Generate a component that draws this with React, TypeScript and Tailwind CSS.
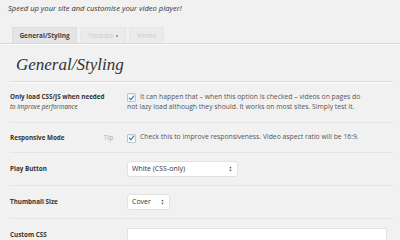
import React from 'react'

const sans = { fontFamily: '"Open Sans", "Liberation Sans", sans-serif' }

const Check = () => (
  <span className="mt-[1px] flex h-[9px] w-[9px] flex-shrink-0 items-center justify-center rounded-[1px] border border-[#c4c4c4] bg-white shadow-[inset_0_1px_1px_rgba(0,0,0,0.08)]">
    <svg viewBox="0 0 10 10" className="h-[8px] w-[8px]">
      <path d="M2 5.2 L4.2 7.4 L8.2 2.4" fill="none" stroke="#1e8cbe" strokeWidth="1.8" strokeLinecap="round" strokeLinejoin="round" />
    </svg>
  </span>
)

const Select = ({ value, width }: { value: string; width: string }) => (
  <div
    className={`flex h-[16px] ${width} items-center justify-between rounded-[3px] border border-[#e2e2e2] bg-white pl-[4px] pr-[5px] text-[7px] text-[#333]`}
  >
    <span>{value}</span>
    <svg viewBox="0 0 4 8" className="h-[6px] w-[3px]">
      <path d="M0.3 3 L2 0.8 L3.7 3 Z M0.3 5 L2 7.2 L3.7 5 Z" fill="#555" />
    </svg>
  </div>
)

export default function App() {
  return (
    <div className="h-[240px] w-[400px] overflow-hidden bg-[#f1f1f1] text-[#444]" style={sans}>
      <p className="pl-[8px] pt-[4px] text-[7.6px] italic leading-[9px] text-[#333]">
        Speed up your site and customise your video player!
      </p>

      {/* Tabs */}
      <div className="mt-[14px] flex h-[17px] items-end gap-[3px] border-b border-[#dadada] pl-[12px] shadow-[0_1px_0_#fafafa]">
        <div className="flex h-[16px] w-[65px] items-center justify-center border border-b-0 border-[#dcdcdc] bg-[#e4e4e4] text-[6.5px] font-bold text-[#444]">
          General/Styling
        </div>
        <div className="flex h-[16px] w-[46px] items-center justify-center gap-[2px] border border-b-0 border-[#e6e6e6] bg-[#ebebeb] text-[6.5px] text-[#cacaca]">
          Youtube
          <span className="h-[2px] w-[2px] rounded-full bg-[#e05a5a]" />
        </div>
        <div className="flex h-[16px] w-[35px] items-center justify-center border border-b-0 border-[#e6e6e6] bg-[#ebebeb] text-[6.5px] text-[#cacaca]">
          Vimeo
        </div>
      </div>

      <div className="px-[10px] pr-[7px]">
        <h1
          className="mt-[11px] pl-[6px] text-[17px] italic leading-[20px] text-[#333]"
          style={{ fontFamily: '"Liberation Serif", "DejaVu Serif", serif' }}
        >
          General/Styling
        </h1>
        <div className="mt-[6px] border-b border-[#dcdcdc] shadow-[0_1px_0_#fbfbfb]" />

        {/* Row 1 */}
        <div className="flex h-[41px] items-center border-b border-[#e4e4e4]">
          <div className="w-[117px] text-[6.3px] leading-[10px]">
            <p className="font-bold text-[#333]">Only load CSS/JS when needed</p>
            <p className="italic text-[#444]">to improve performance</p>
          </div>
          <div className="flex gap-[4px] text-[6.8px] leading-[10px] text-[#555]">
            <Check />
            <p>
              It can happen that – when this option is checked – videos on pages do
              <br />
              <span className="-ml-[13px]">not lazy load although they should. It works on most sites. Simply test it.</span>
            </p>
          </div>
        </div>

        {/* Row 2 */}
        <div className="flex h-[30px] items-center border-b border-[#e4e4e4]">
          <div className="flex w-[117px] items-center justify-between pr-[14px] text-[6.3px]">
            <p className="font-bold text-[#333]">Responsive Mode</p>
            <span className="text-[6.3px] text-[#aaa]">Tip</span>
          </div>
          <div className="flex items-center gap-[4px] text-[6.8px] text-[#555]">
            <Check />
            <p>Check this to improve responsiveness. Video aspect ratio will be 16:9.</p>
          </div>
        </div>

        {/* Row 3 */}
        <div className="flex h-[33px] items-center border-b border-[#e4e4e4]">
          <p className="w-[117px] text-[6.3px] font-bold text-[#333]">Play Button</p>
          <Select value="White (CSS-only)" width="w-[111px]" />
        </div>

        {/* Row 4 */}
        <div className="flex h-[33px] items-center border-b border-[#e4e4e4]">
          <p className="w-[117px] text-[6.3px] font-bold text-[#333]">Thumbnail Size</p>
          <Select value="Cover" width="w-[43px]" />
        </div>

        {/* Row 5 */}
        <div className="flex items-start pt-[9px]">
          <p className="mt-[2px] w-[117px] text-[6.3px] font-bold text-[#333]">Custom CSS</p>
          <div className="h-[40px] w-[260px] border border-[#e2e2e2] bg-white" />
        </div>
      </div>
    </div>
  )
}
